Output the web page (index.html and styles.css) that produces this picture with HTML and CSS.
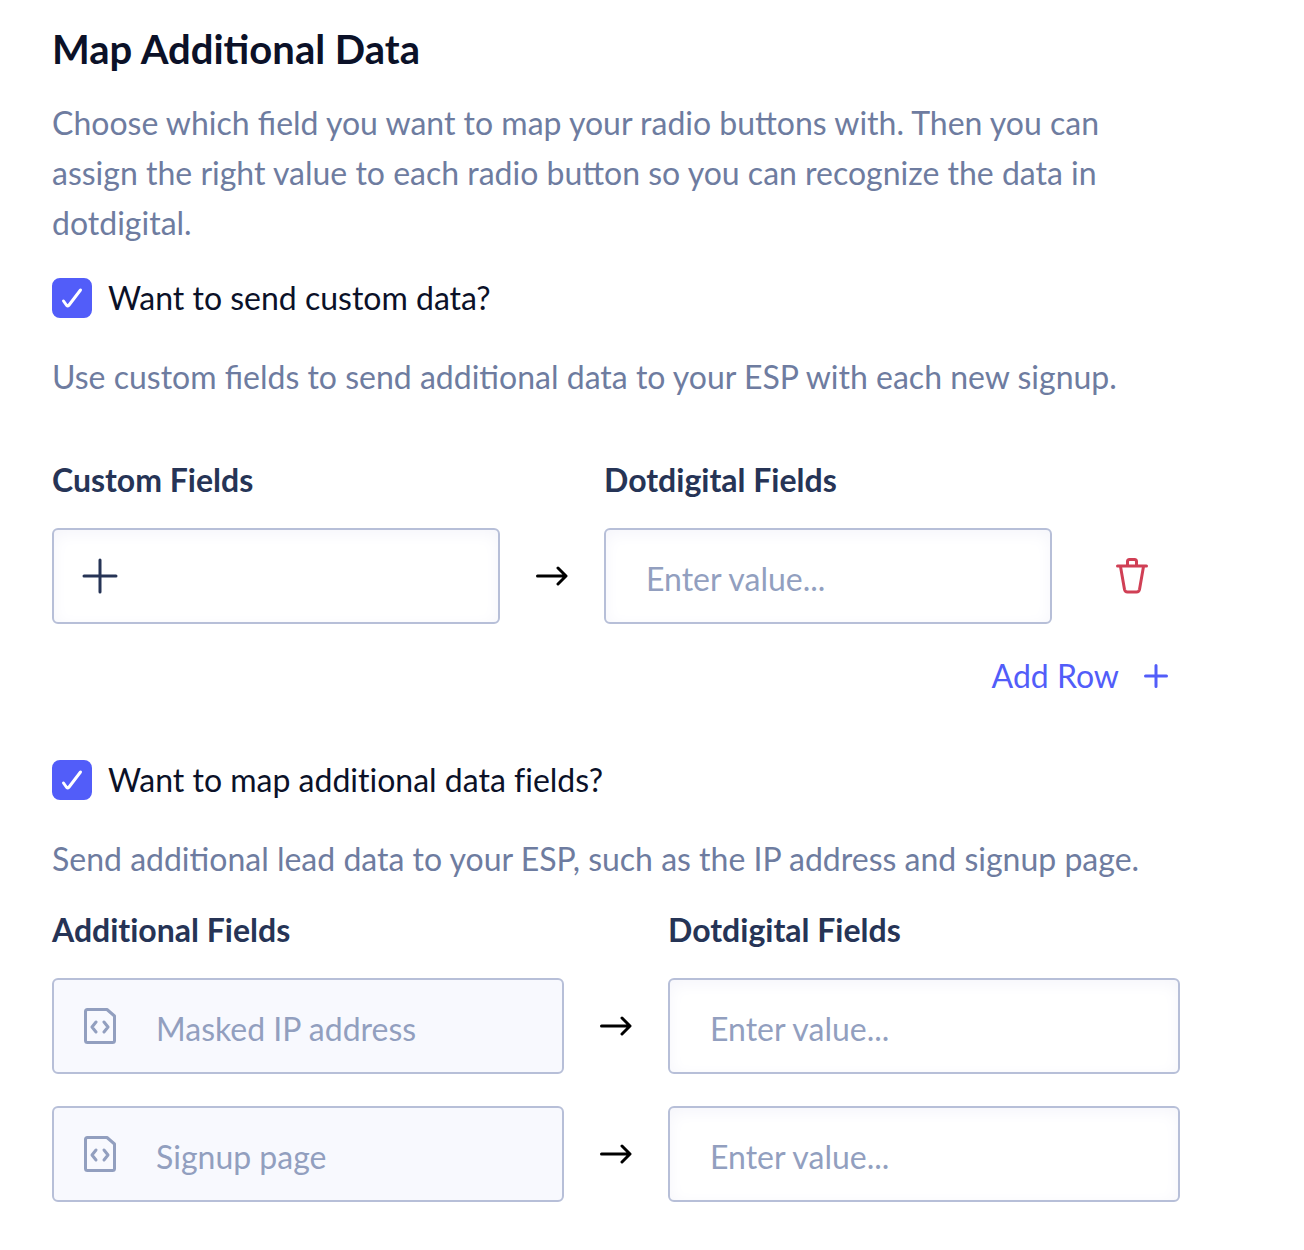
FILE: index.html
```html
<!DOCTYPE html>
<html lang="en">
<head>
  <meta charset="UTF-8">
  <title>Map Additional Data</title>
  <link rel="stylesheet" href="styles.css">
</head>
<body>
  <main>
    <h1>Map Additional Data</h1>
    <p>Choose which field you want to map your radio buttons with. Then you can assign the right value to each radio button so you can recognize the data in dotdigital.</p>

    <section class="custom">
      <label class="check">
        <span class="box">
          <input type="checkbox" checked>
          <svg viewBox="0 0 40 40"><path d="M11.500 23l3.200 4.500q1 1 2 0L28.500 12"/></svg>
        </span>
        Want to send custom data?
      </label>
      <p>Use custom fields to send additional data to your ESP with each new signup.</p>

      <div class="fields with-delete">
        <h2 id="customHead">Custom Fields</h2>
        <h2 id="dotHead1" class="right">Dotdigital Fields</h2>

        <button type="button" class="field" aria-labelledby="customHead">
          <svg class="icon dark" viewBox="0 0 36 36"><path d="M18 2v32M2 18h32"/></svg>
        </button>
        <svg class="arrow" viewBox="0 0 32 20"><path d="M1.500 10h28M22 2l8 8-8 8"/></svg>
        <div class="field">
          <input type="text" placeholder="Enter value..." aria-labelledby="dotHead1">
        </div>
        <button type="button" class="delete" aria-label="Delete row">
          <svg viewBox="0 0 32 36"><path d="M1.500 8h29M11.500 8V3.500q0-2 2-2h5q2 0 2 2V8M4.500 8.500l4 23q.5 2.500 3 2.500h9q2.500 0 3-2.500l4-23"/></svg>
        </button>
      </div>

      <div class="actions">
        <button type="button" class="add">Add Row
          <svg viewBox="0 0 24 24"><path d="M12 1.500v21M1.500 12h21"/></svg>
        </button>
      </div>
    </section>

    <section class="additional">
      <label class="check">
        <span class="box">
          <input type="checkbox" checked>
          <svg viewBox="0 0 40 40"><path d="M11.500 23l3.200 4.500q1 1 2 0L28.500 12"/></svg>
        </span>
        Want to map additional data fields?
      </label>
      <p>Send additional lead data to your ESP, such as the IP address and signup page.</p>

      <div class="fields">
        <h2 id="addHead">Additional Fields</h2>
        <h2 id="dotHead2" class="right">Dotdigital Fields</h2>

        <div class="field locked">
          <svg class="icon" viewBox="0 0 36 36"><path d="M5.500 1.500h19.500l7.500 6.500V32.500q0 2-2 2h-25q-2 0-2-2v-29q0-2 2-2zM14 14l-4 5 4 5M22 14l4 5-4 5"/></svg>
          <input type="text" value="Masked IP address" disabled aria-labelledby="addHead">
        </div>
        <svg class="arrow" viewBox="0 0 32 20"><path d="M1.500 10h28M22 2l8 8-8 8"/></svg>
        <div class="field">
          <input type="text" placeholder="Enter value..." aria-labelledby="dotHead2">
        </div>

        <div class="field locked">
          <svg class="icon" viewBox="0 0 36 36"><path d="M5.500 1.500h19.500l7.500 6.500V32.500q0 2-2 2h-25q-2 0-2-2v-29q0-2 2-2zM14 14l-4 5 4 5M22 14l4 5-4 5"/></svg>
          <input type="text" value="Signup page" disabled aria-labelledby="addHead">
        </div>
        <svg class="arrow" viewBox="0 0 32 20"><path d="M1.500 10h28M22 2l8 8-8 8"/></svg>
        <div class="field">
          <input type="text" placeholder="Enter value..." aria-labelledby="dotHead2">
        </div>
      </div>
    </section>
  </main>
</body>
</html>
```

FILE: styles.css
```css
* { box-sizing: border-box; }
body { margin: 0; background: #fff; color: #0b1128; font-family: Lato, sans-serif; font-size: 32px; }
main { padding: 24px 124px 16px 52px; }
h1 { margin: 0 0 24px; font-size: 40px; line-height: 50px; font-weight: 700; }
h2 { margin: 0 0 28px; font-size: 32px; line-height: 40px; font-weight: 700; color: #263456; font-variant-ligatures: none; }
p { margin: 0; line-height: 50px; color: #6e7ca0; }
button, input { font: inherit; }
button { cursor: pointer; }
svg { display: block; flex: none; fill: none; stroke: currentColor; stroke-width: 3; stroke-linecap: round; stroke-linejoin: round; }

.check { display: flex; align-items: center; gap: 16px; margin: 30px 0 34px; line-height: 40px; font-variant-ligatures: none; cursor: pointer; }
.box { display: grid; width: 40px; height: 40px; }
.box input, .box svg { grid-area: 1 / 1; }
.box input { appearance: none; width: 40px; height: 40px; margin: 0; border: 2px solid #b7bfd8; border-radius: 8px; cursor: pointer; }
.box input:checked { background: #525df9; border-color: #525df9; }
.box svg { width: 40px; height: 40px; color: #fff; pointer-events: none; }
.box input:not(:checked) + svg { visibility: hidden; }

.fields { display: grid; grid-template-columns: minmax(0, 1fr) 104px minmax(0, 1fr); align-items: center; }
.with-delete { grid-template-columns: minmax(0, 1fr) 104px minmax(0, 1fr) 128px; margin-top: 58px; }
.additional .fields { margin-top: 26px; }
.right { grid-column: 3 / -1; }

.field { display: flex; align-items: center; width: 100%; height: 96px; padding: 0 28px; background: #fff; border: 2px solid #b7bfd8; border-radius: 6px; box-shadow: inset 0 4px 16px #f5f5fb; font-variant-ligatures: none; }
.field input { flex: 1; min-width: 0; height: 92px; padding: 4px 12px 0; border: none; outline: none; background: none; color: #263456; }
.field input::placeholder { color: #929fbf; opacity: 1; }
.field:focus-within { border-color: #525df9; }
.icon { width: 36px; height: 36px; }
.dark { color: #263456; }
.locked { background: #f8f9fe; box-shadow: none; color: #929fbf; }
.locked input { padding-left: 38px; color: #929fbf; }
.additional .field, .additional .arrow { margin-bottom: 32px; }
.arrow { justify-self: center; width: 32px; height: 20px; color: #000; }

.delete { justify-self: center; margin-left: 32px; padding: 0; border: none; background: none; color: #d03f55; }
.delete svg { width: 32px; height: 36px; }
.actions { display: flex; justify-content: flex-end; padding-right: 12px; margin: 32px 0 64px; }
.add { display: flex; align-items: center; gap: 25px; padding: 0; border: none; background: none; color: #525df9; line-height: 40px; }
.add svg { width: 24px; height: 24px; }
```
